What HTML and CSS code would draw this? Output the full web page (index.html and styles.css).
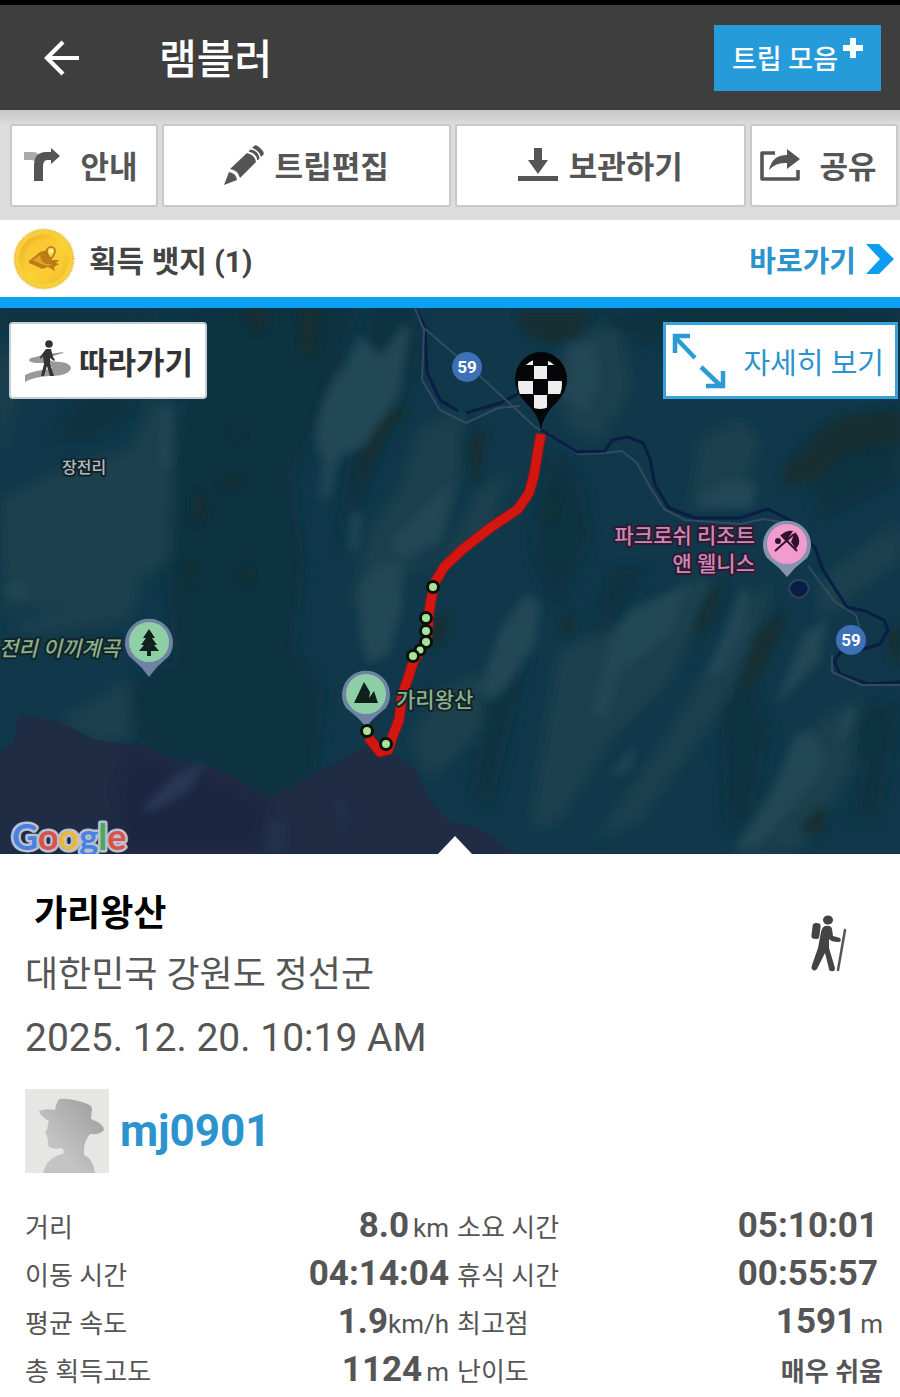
FILE: index.html
```html
<!DOCTYPE html>
<html lang="ko">
<head>
<meta charset="utf-8">
<meta name="viewport" content="width=device-width, initial-scale=1">
<title>램블러</title>
<link rel="stylesheet" href="styles.css">
</head>
<body>
<header class="topbar">
  <button class="back" aria-label="뒤로">
    <svg width="36" height="36" viewBox="0 0 36 36" fill="none" stroke="#fff" stroke-width="4.2"><path d="M35 18H3M19 2 3 18l16 16"/></svg>
  </button>
  <h1 class="app-title">램블러</h1>
  <button class="collect">트립 모음<svg class="plus" width="20" height="20" viewBox="0 0 20 20"><path d="M7 0h6v7h7v6h-7v7H7v-7H0V7h7z" fill="#fff"/></svg></button>
</header>

<nav class="toolbar">
  <button class="tool tool-guide">
    <svg width="36" height="34" viewBox="0 0 36 34"><path d="M0 4h9q5 0 7 5l-5 6q0-3-4-3H0z" fill="#aaa"/><path d="M10 33V18Q10 4 22 4h5V0l9 8-9 8v-4h-4q-4 0-4 7v14z" fill="#555"/></svg>
    <span>안내</span>
  </button>
  <button class="tool tool-edit">
    <svg width="40" height="40" viewBox="0 0 40 40"><g fill="#555"><path d="M0 40 5 27q7 1 8 8z"/><path d="M6 24 23 8q8 2 9 9L16 33q-2-8-10-9z"/><path d="m24.500 6.500 2-2q8 1 9 9l-2 2q-1-7-9-9z"/><path d="m28 3 2-2q2-2 5 1l3 3q3 3 1 5l-2 2q-2-7-9-9z"/></g></svg>
    <span>트립편집</span>
  </button>
  <button class="tool tool-save">
    <svg width="40" height="34" viewBox="0 0 40 34" fill="#555"><path d="M16 0h8v12h6L20 26 10 12h6zM0 28h40v5H0z"/></svg>
    <span>보관하기</span>
  </button>
  <button class="tool tool-share">
    <svg width="40" height="32" viewBox="0 0 40 32"><path d="M15 4H2v26h36V21" fill="none" stroke="#555" stroke-width="3.6" stroke-linejoin="round"/><path d="M9 21Q12 6 27 6V0l13 10-13 10v-6Q16 13 9 21z" fill="#555"/></svg>
    <span>공유</span>
  </button>
</nav>

<section class="badges">
  <svg width="62" height="62" viewBox="0 0 62 62">
    <defs><linearGradient id="coin" x1="0" y1="0" x2="1" y2="1"><stop offset="0" stop-color="#efab25"/><stop offset=".55" stop-color="#fbd535"/><stop offset="1" stop-color="#f0b62a"/></linearGradient></defs>
    <circle cx="31" cy="31" r="29.5" fill="#f8cf3a" stroke="#e9bd3c" stroke-width="2" stroke-dasharray="1 1"/>
    <circle cx="31" cy="31" r="25" fill="url(#coin)"/>
    <circle cx="31" cy="31" r="20" fill="#fbcb34" opacity=".7"/>
    <path d="m16 33 11-9 7-2 4 10 8 0-3 3 3 1-5 3 1 4-7-4-6 2-6-3-7-3z" fill="#bd7c16"/>
    <path d="m20 32 7-5q1 8 7 9l5 0-4 2-7-2z" fill="#e0a425"/>
    <path d="M38 31q-5-6-4-8a4 4 0 0 1 8 0q0 3-4 8z" fill="#fbd44a" stroke="#b67612" stroke-width="1.6"/><circle cx="38" cy="23" r="2" fill="#fff5b0"/>
  </svg>
  <h2 class="badge-title">획득 뱃지 (1)</h2>
  <a class="shortcut" href="#badges">바로가기<svg width="28" height="30" viewBox="0 0 28 30"><path d="M0 0h13l15 15-15 15H0l14-15z" fill="#0d9df0"/></svg></a>
</section>

<section class="map">
  <svg class="map-canvas" viewBox="0 308 900 546">
    <defs>
      <filter id="soft" x="-20%" y="-20%" width="140%" height="140%"><feGaussianBlur stdDeviation="4"/></filter>
      <filter id="haze" x="-20%" y="-20%" width="140%" height="140%"><feGaussianBlur stdDeviation="7"/></filter>
      <clipPath id="flag"><ellipse cx="540" cy="384" rx="22" ry="25"/></clipPath>
    </defs>
    <rect y="308" width="900" height="546" fill="#10384a"/>
    <g filter="url(#haze)">
      <g fill="#0f3341">
        <path d="M190 300h170l-30 110-35 60 10 100-10 80 30 40-10 90-60 30-60-50-20-90-15-160 20-90z"/>
        <path d="M130 690q30-40 60-20l20 50-10 50-60-20zM15 600q0-70 50-120l50-10-40 80-30 30zM0 310h200l-60 15-140 5zM50 440l35-50 60 10-40 35z"/>
        <path d="M550 450q40 20 40 90l-30 70-30-60zM530 640l-20 90-20 80-20-20 20-100zM610 570l40 0-40 50-30 50zM690 610l15-30 15 0-20 60-50 60zM720 700l30-20 20 50-20 90-25 10z"/>
        <path d="M590 320q100-40 310-10v60l-150 10-60-20zM800 440l100-30v70l-80 40zM820 740l60-40 20 10-20 110-30 0 15-60zM370 300h45l5 60-30 70-40 100-15 20 15-110z"/>
      </g>
      <g fill="#1a3f4d">
        <path d="M0 500 60 470 130 450 155 400l20 10-5 150-70 40-95 10zM0 340l20 30-15 80-5 0zM60 720l70-40 0 60-40 0z"/>
        <path d="M420 430l40-20 0 60-20 70-50 50-40 20 20-80 30-40zM480 490l30-20-20 60-70 50 40-50zM560 350q40-30 60-20l10 60-30 50-30-10-20-50zM440 690l50-20-10 60-50 50-20-40z"/>
        <path d="M560 650l100-40 30-30 30 0-50 100-60 60-50 80-30 10 15-90zM750 600l20-20-10 60-40 70-80 110-45 20 70-100zM700 440l40-20 20 20-20 60-50 10zM820 720l40-20-10 70-50 80-70 10zM820 580l80-60v40l-80 60zM0 630l80-30 60-20-10 40-90 15z"/>
      </g>
    </g>
    <g filter="url(#soft)">
      <g fill="#234655">
        <path d="M315 440q5-50 30-75l15-30 20 20 25-32 5 10-10 60-30 50-45 22zM360 590q15-35 40-25l3 40-15 50-20 8q-12-30-8-73zM480 690l20-60 25-35 15 5-5 45-30 45-15 10zM390 540l35-35 30-25-15 60-40 20z"/>
        <path d="M592 715l18-75 20-30 60-27-20 50-50 40-15 45zM705 680l25-60 10-30h10l-6 40-20 40zM570 345l25-5 5 45-15 30-20-20zM697 498l30-18 30 3-5 25-50 0zM777 705l25-68 25-20-8 45zM775 790l20-55 15-5 18 30-15 25-55 60-22 5z"/>
        <path d="M325 455l15-5-10 45-10 5zM352 510l10 5-5 35-8 0zM835 745l10-35 10 0-6 20zM610 775l25-30-5 25zM0 590l25-10 0 20zM160 465l5-60 5 0 0 65z"/>
      </g>
      <g fill="#122f33">
        <path d="M245 308h20l0 20-12 4zM300 308l20 0-5 50-12-5zM232 430l12 0-6 15zM193 490l14 10-3 18-10 8zM222 480l15-6 4 10-14 6zM184 565l12-2-2 24-8-4zM236 575l16-12-6 24z"/>
        <path d="M368 440l15-22 20-12 4 6-22 26-24 44-5 0zM468 445l10-20 8 5-5 40-8 16zM545 508l12-15-5 25-7 5zM430 620l22-8-6 24-14 16zM560 625l12-15 2 15-9 16z"/>
        <path d="M515 312h76l-12 26-30 6-25-12zM740 685l15-50 28-24 4 6-22 50-20 24zM695 632l10-30 15-20 5 5-15 34-12 16zM778 486l10-25 22-12 10-20 24-14 60-5v32l-60 10-25 28zM798 828l20-20 10 5-8 24zM888 630l12-5v40l-10-5z"/>
      </g>
    </g>
    <path d="M-5 755 12 745 20 714 35 717 60 722 80 732 95 740 140 745 180 762 210 766 240 780 270 798 290 788 310 775 335 765 366 745 390 750 415 770 430 800 450 822 480 828 518 856H-5z" fill="#202b44"/>
    <g filter="url(#soft)"><path d="M130 750 185 768 240 788 268 802 258 850H125L115 790z" fill="#1a2640"/><path d="M140 810 175 775 205 762 190 790 155 810z" fill="#253754"/><path d="M265 854l5-30 15-5 0 35zM335 790l15 25-8 20z" fill="#23334c"/></g>

    <g fill="none" stroke-linejoin="round">
      <path d="M415 308 425 327 427 372 440 400 458 411M466 413 500 403 526 390" stroke="#0a1d45" stroke-width="3"/>
      <path d="M415 308 424 330 422 380 440 410 466 423 498 408 520 406M424 328 480 376 535 427 578 454 605 453 622 451 637 463 650 487 664 509 685 520 740 524 764 519 785 523M808 566 835 602 856 615 860 630" stroke="#334b60" stroke-width="2"/>
      <path d="M541 430 577 452 605 451 612 440 628 437 643 443 650 459 655 485 669 508 695 518 740 518 768 509 790 520 815 548 823 570 847 607 865 611 884 620 888 630 880 644 860 650 840 653 834 661 840 674 868 684 900 682" stroke="#0a1d45" stroke-width="3"/>
      <path d="M832 655 832 672 862 685 900 685" stroke="#334b60" stroke-width="2"/>
      <path d="M789 588q2-8 10-8t10 8q-1 8-10 10-9-2-10-10z" fill="#0a1d45" stroke="#30435b" stroke-width="2"/>
      <path d="M541 434 538 450 534 475 529 493 518 509 490 528 463 549 444 567 434 584 429 612 427 640 414 660 402 696 399 720 392 738 388 750 380 752 368 737" stroke="#7d1c22" stroke-width="11"/>
      <path d="M541 434 538 450 534 475 529 493 518 509 490 528 463 549 444 567 434 584 429 612 427 640 414 660 402 696 399 720 392 738 388 750 380 752 368 737" stroke="#d3160f" stroke-width="9"/>
    </g>

    <path d="M541 430Q539 415 526 403 515 392 515 379A26 27 0 0 1 567 379Q567 392 556 403 543 415 541 430z" fill="#050607"/>
    <g clip-path="url(#flag)" fill="#eee"><path d="M518 358h15v7h-15zM548 358h15v7h-15zM534 366h13v13h-13zM518 381h15v13h-15zM548 381h15v13h-15zM534 395h13v15h-13z"/></g>

    <g>
      <circle cx="467" cy="367" r="15" fill="#3e70b7"/><circle cx="851" cy="640" r="15" fill="#3e70b7"/>
      <g class="road-no" text-anchor="middle"><text x="467" y="373">59</text><text x="851" y="646">59</text></g>
    </g>

    <g fill="#6f83a5">
      <path d="M149 677 141 667 129 656A24 24 0 1 1 169 656L157 667z"/>
      <path d="M366 727 358 718 346 708A24 24 0 1 1 386 708L374 718z"/>
      <path d="M787 577 779 568 767 558A24 24 0 1 1 807 558L795 568z" fill="#8792ad"/>
    </g>
    <circle cx="149" cy="642" r="20" fill="#8fcfa5"/><circle cx="366" cy="694" r="20" fill="#8fcfa5"/><circle cx="787" cy="544" r="20" fill="#f29bd0"/>
    <path d="M149 629 143 638h3l-5 7h3l-5 6h8v5h4v-5h8l-5-6h3l-5-7h3z" fill="#10201c"/>
    <path d="m354 703 10-21 6 10-1 6 5-7 4 12z" fill="#10201c"/>
    <g fill="#30102a"><circle cx="778" cy="541" r="3"/><path d="M781 535q6-5 12-4l-6 9zM795 532q5 5 4 12l-3 5-5-7z"/><path d="m775 551 19-17M784 538l13 13M781 535l14 14" stroke="#30102a" stroke-width="2" fill="none"/></g>

    <g fill="#a9e39b" stroke="#071108" stroke-width="3"><circle cx="433" cy="587" r="5.5"/><circle cx="426" cy="618" r="5.5"/><circle cx="426" cy="631" r="5.5"/><circle cx="426" cy="642" r="5.5"/><circle cx="420" cy="650" r="5"/><circle cx="413" cy="656" r="5.5"/><circle cx="367" cy="731" r="5.5"/><circle cx="386" cy="744" r="5.5"/></g>

    <g class="place">
      <text class="village" x="62" y="473">장전리</text>
      <text class="park italic" x="120" y="656" text-anchor="end">전리 이끼계곡</text>
      <text class="park" x="396" y="707">가리왕산</text>
      <text class="resort" x="755" y="543" text-anchor="end">파크로쉬 리조트</text>
      <text class="resort" x="755" y="571" text-anchor="end">앤 웰니스</text>
    </g>
    <text class="google" x="12" y="850"><tspan fill="#4a80e0">G</tspan><tspan fill="#dc5048">o</tspan><tspan fill="#e8b93c">o</tspan><tspan fill="#4a80e0">g</tspan><tspan fill="#48a860">l</tspan><tspan fill="#dc5048">e</tspan></text>
    <path d="m437 855 18-19 18 19z" fill="#fff"/>
  </svg>
  <button class="follow">
    <svg width="46" height="42" viewBox="0 0 46 42"><g fill="#999"><path d="M38 12Q20 14 6 18q-6 4 6 5l18 0-8-5 16-5z"/><path d="M20 22q24-2 26 6-2 8-22 8-16 1-24 6v-7q10-5 26-6 4-2-6-4z"/></g><g fill="#333"><circle cx="24" cy="4" r="3.8"/><path d="m21 9 5 0 2 8 2 3-1 1-4-3 0 6 4 12h-4l-3-10-3 10h-3l3-12-1-8-2 3-1-2z"/></g></svg>
    <span>따라가기</span>
  </button>
  <button class="detail">
    <svg width="54" height="56" viewBox="0 0 54 56" fill="none" stroke="#2b9bd6" stroke-width="4.5"><path d="M23 25 3 4M3 20V3H18M29 34 50 54M51 38V53H34"/></svg>
    <span>자세히 보기</span>
  </button>
</section>

<main class="trip">
  <div class="summary">
    <div class="summary-text">
      <h2 class="trip-name">가리왕산</h2>
      <p class="region">대한민국 강원도 정선군</p>
      <p class="date">2025. 12. 20. 10:19 AM</p>
    </div>
    <svg class="hiker" width="36" height="58" viewBox="0 0 36 58" fill="#444"><ellipse cx="17" cy="5" rx="5" ry="4.5"/><rect x="1" y="8" width="8" height="16" rx="3" transform="rotate(7 5 16)"/><path d="M14 11q6-1 7 3l1 7 7 2q2 3-1 4-8 0-10-3l0 9 6 20q0 4-4 3-2 0-2-2L14 38 6 54q-3 3-5 0-1-1 0-4l6-17 3-16q1-5 4-6z"/><path d="M34 15 27 55" stroke="#555" stroke-width="2.5" stroke-linecap="round"/></svg>
  </div>
  <a class="user" href="#profile">
    <svg width="84" height="84" viewBox="0 0 84 84"><defs><linearGradient id="face" x1="0" y1="1" x2="1" y2="0"><stop offset=".3" stop-color="#c4c4c4"/><stop offset="1" stop-color="#9b9b9b"/></linearGradient></defs><rect width="84" height="84" fill="#e6e6e5"/><path d="M18 84q4-16 20-19 2-3-1-6-8 2-13-1-2-3-1-7-1-2-1-4l-2-3q3-6 3-9l1-3Q15 27 14 22q6-3 16-1 2-10 5-11 8-1 25 4 7 2 7 6l-1 10q13 5 13 11-3 5-14 4-5 6-6 14l0 7q9 4 11 18z" fill="url(#face)"/></svg>
    <span>mj0901</span>
  </a>
  <table class="stats">
    <colgroup><col class="col-left"><col class="col-left"><col><col></colgroup>
    <tbody>
      <tr><th scope="row">거리</th><td><b>8.0</b><span class="unit">km</span></td><th scope="row">소요 시간</th><td class="time"><b>05:10:01</b></td></tr>
      <tr><th scope="row">이동 시간</th><td><b>04:14:04</b></td><th scope="row">휴식 시간</th><td class="time"><b>00:55:57</b></td></tr>
      <tr><th scope="row">평균 속도</th><td><b>1.9</b><span>km/h</span></td><th scope="row">최고점</th><td><b>1591</b><span class="unit">m</span></td></tr>
      <tr><th scope="row">총 획득고도</th><td><b>1124</b><span class="unit">m</span></td><th scope="row">난이도</th><td><strong>매우 쉬움</strong></td></tr>
    </tbody>
  </table>
</main>
</body>
</html>
```
FILE: styles.css
```css
* { box-sizing: border-box; }
body, h1, h2, p { margin: 0; }
body { background: #fff; color: #555; font-family: Roboto, "Noto Sans CJK KR", sans-serif; }
button { font: inherit; color: inherit; border: 0; padding: 0; cursor: pointer; }
a { text-decoration: none; }
svg { display: block; flex: none; }

.topbar { display: flex; align-items: center; height: 110px; padding: 0 19px 0 44px; background: #3e3e3e; border-top: 5px solid #000; color: #fff; }
.back { background: none; }
.app-title { margin-left: 79px; padding-bottom: 4px; font-size: 41px; font-weight: 500; }
.collect { display: flex; align-items: center; gap: 5px; height: 66px; margin-left: auto; padding: 0 18px; background: #269bda; font-size: 27px; font-weight: 500; }
.plus { margin-bottom: 20px; }

.toolbar { display: grid; grid-template-columns: 148fr 289fr 292fr 148fr; gap: 4px; height: 110px; padding: 14px 2px 13px 10px; background: linear-gradient(#c6c6c6, #dcdcdc 14px); }
.tool { display: flex; align-items: center; justify-content: center; gap: 11px; padding-bottom: 2px; background: #fff; border: 2px solid #c9c9c9; border-radius: 3px; font-size: 31px; font-weight: 700; }
.tool-guide, .tool-share { gap: 20px; }
.tool-guide { padding-right: 6px; }
.tool-share { padding-right: 12px; }

.badges { display: flex; align-items: center; height: 88px; padding: 0 6px 0 13px; border-bottom: 11px solid #0aa1f5; }
.badge-title { margin-left: 14px; font-size: 30px; font-weight: 700; color: #444; }
.shortcut { display: flex; align-items: center; gap: 10px; margin-left: auto; color: #2b93cd; font-size: 29px; font-weight: 700; }

.map { position: relative; background: #10384a; }
.map-canvas { width: 100%; height: auto; }
.follow, .detail { position: absolute; top: 14px; display: flex; align-items: center; height: 77px; background: #fff; }
.follow { left: 9px; gap: 8px; padding: 0 12px 0 14px; border: 2px solid #c5ced2; border-radius: 4px; color: #333; font-size: 31px; font-weight: 700; }
.detail { right: 2px; gap: 17px; padding: 0 11px 0 6px; border: 3px solid #3aa1d9; color: #2b93cd; font-size: 29px; }
.place text { font-size: 21px; font-weight: 500; paint-order: stroke; stroke: #112428; stroke-width: 4px; stroke-linejoin: round; }
.place .village { font-size: 16px; fill: #b4bbc3; }
.place .park { fill: #8cb089; }
.place .italic { font-style: italic; }
.place .resort { fill: #cf87b8; stroke: #30192f; }
.road-no { font-size: 17px; font-weight: 700; fill: #fff; }
.google { font-family: Lato, sans-serif; font-size: 36px; font-weight: 700; paint-order: stroke; stroke: #b9c0d0; stroke-width: 5px; stroke-linejoin: round; }

.trip { padding: 30px 17px 0 25px; }
.summary { display: flex; justify-content: space-between; padding-right: 36px; }
.trip-name { padding-left: 9px; color: #000; font-size: 36px; line-height: 60px; font-weight: 700; }
.region { font-size: 36px; line-height: 62px; }
.date { font-size: 39px; line-height: 64px; }
.hiker { margin-top: 31px; }
.user { display: flex; align-items: center; gap: 11px; margin-top: 19px; color: #2b93cd; font-size: 44px; font-weight: 700; }
.stats { width: 100%; margin-top: 33px; border-collapse: collapse; table-layout: fixed; }
.col-left { width: 216px; }
.stats th, .stats td { height: 48px; padding: 0; font-size: 26px; line-height: 40px; white-space: nowrap; vertical-align: baseline; }
.stats th { text-align: left; font-weight: 400; }
.stats td { text-align: right; }
.stats td:nth-child(2) { padding-right: 8px; }
.stats b { font-size: 35px; line-height: 40px; font-weight: 700; }
.stats .unit { margin-left: 4px; }
.stats .time { padding-right: 5px; }
```
